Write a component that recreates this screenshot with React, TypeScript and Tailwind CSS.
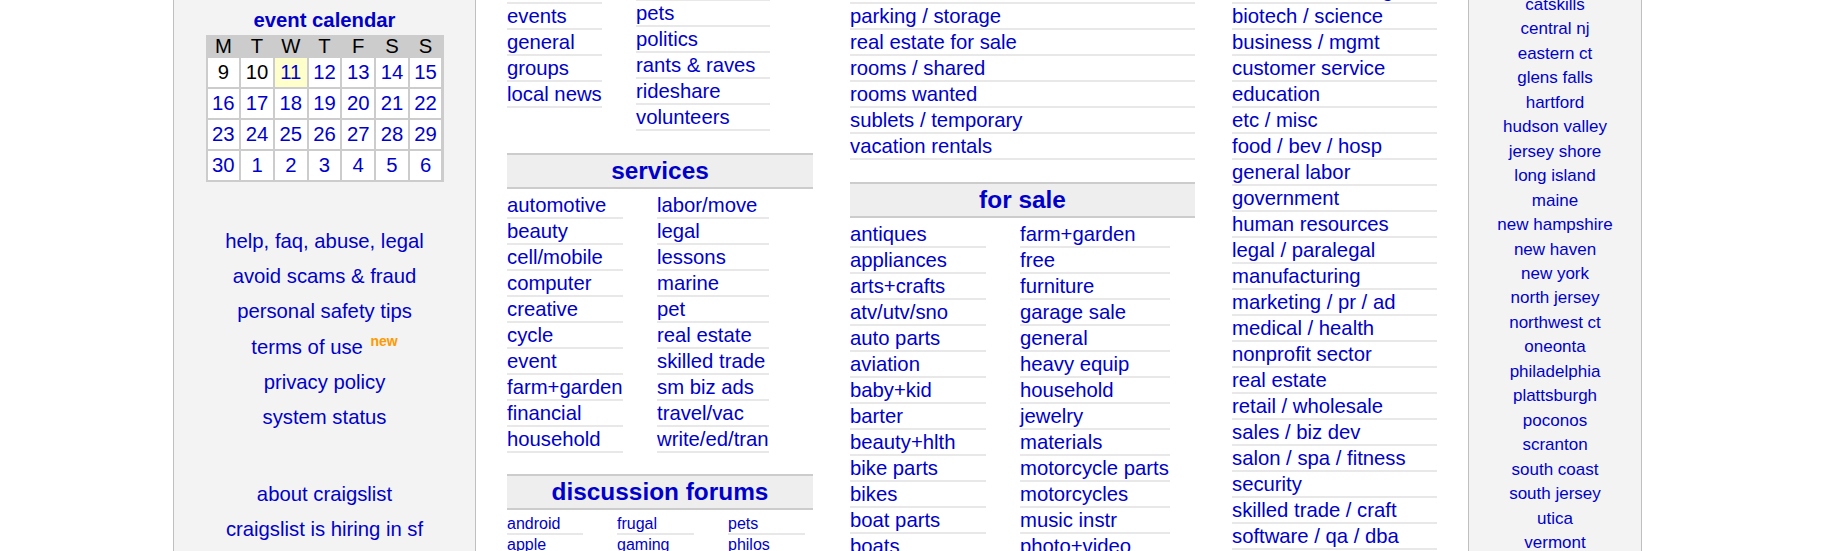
import React from "react";

type ListProps = { items: string[]; w: string; small?: boolean; wrap?: boolean };

function List({ items, w, small, wrap }: ListProps) {
  return (
    <ul className={w}>
      {items.map((t, i) => (
        <li
          key={i}
          className={
            (small ? "text-[16px] leading-[18.4px]" : "text-[20.3px] leading-[23px]") +
            " pt-[1px] border-b-2 border-[#e8e8e8] " +
            (wrap ? "" : "whitespace-nowrap")
          }
        >
          <a className="text-[#0000cc] cursor-pointer">{t}</a>
        </li>
      ))}
    </ul>
  );
}

function Head({ children }: { children: React.ReactNode }) {
  return (
    <h3 className="h-[36px] border-y-2 border-[#cccccc] bg-[#eeeeee] flex items-center justify-center text-[24.4px] font-bold text-[#0000cc] whitespace-nowrap">
      {children}
    </h3>
  );
}

const communityL = ["activities", "artists", "childcare", "classes", "events", "general", "groups", "local news"];
const communityR = ["lost+found", "missed connections", "musicians", "pets", "politics", "rants & raves", "rideshare", "volunteers"];
const servicesL = ["automotive", "beauty", "cell/mobile", "computer", "creative", "cycle", "event", "farm+garden", "financial", "household"];
const servicesR = ["labor/move", "legal", "lessons", "marine", "pet", "real estate", "skilled trade", "sm biz ads", "travel/vac", "write/ed/tran"];
const forumsA = ["android", "apple", "arts", "atheist", "autos", "beauty", "bikes", "celebs", "comp", "cosmos", "diet", "divorce", "dying", "eco", "feedbk", "film", "fixit", "food"];
const forumsB = ["frugal", "gaming", "garden", "haiku", "help", "history", "housing", "jobs", "jokes", "legal", "manners", "marriage", "money", "music", "open", "parent"];
const forumsC = ["pets", "philos", "photo", "politics", "psych", "recover", "religion", "rofo", "science", "spirit", "sports", "super", "tax", "travel", "tv", "vegan", "words", "writing"];
const housing = ["apts / housing", "housing swap", "housing wanted", "office / commercial", "parking / storage", "real estate for sale", "rooms / shared", "rooms wanted", "sublets / temporary", "vacation rentals"];
const saleL = ["antiques", "appliances", "arts+crafts", "atv/utv/sno", "auto parts", "aviation", "baby+kid", "barter", "beauty+hlth", "bike parts", "bikes", "boat parts", "boats", "books", "business", "cars+trucks"];
const saleR = ["farm+garden", "free", "furniture", "garage sale", "general", "heavy equip", "household", "jewelry", "materials", "motorcycle parts", "motorcycles", "music instr", "photo+video", "rvs+camp", "sporting", "tickets"];
const jobs = ["accounting+finance", "admin / office", "arch / engineering", "art / media / design", "biotech / science", "business / mgmt", "customer service", "education", "etc / misc", "food / bev / hosp", "general labor", "government", "human resources", "legal / paralegal", "manufacturing", "marketing / pr / ad", "medical / health", "nonprofit sector", "real estate", "retail / wholesale", "sales / biz dev", "salon / spa / fitness", "security", "skilled trade / craft", "software / qa / dba", "systems / networking", "technical support"];
const nearby = ["catskills", "central nj", "eastern ct", "glens falls", "hartford", "hudson valley", "jersey shore", "long island", "maine", "new hampshire", "new haven", "new york", "north jersey", "northwest ct", "oneonta", "philadelphia", "plattsburgh", "poconos", "scranton", "south coast", "south jersey", "utica", "vermont"];

const weeks = [
  [9, 10, 11, 12, 13, 14, 15],
  [16, 17, 18, 19, 20, 21, 22],
  [23, 24, 25, 26, 27, 28, 29],
  [30, 1, 2, 3, 4, 5, 6],
];

export default function App() {
  return (
    <div className="w-[1838px] h-[551px] overflow-hidden bg-white flex items-stretch pl-[173px] font-['Liberation_Sans',Arial,sans-serif]">
      {/* left bar */}
      <div className="w-[303px] shrink-0 bg-[#f3f3f3] border-x border-[#bfbfbf]">
        <div className="pt-[8px] text-center text-[20.3px] leading-[24px] font-bold text-[#0000cc]">event calendar</div>
        <div className="mt-[3px] mx-auto w-[238px] bg-[#cccccc] px-[2px] pb-[2px] grid grid-cols-7 gap-[2px]">
          {["M", "T", "W", "T", "F", "S", "S"].map((d, i) => (
            <div key={i} className="h-[21px] leading-[23px] text-center text-[20.3px] text-black">
              {d}
            </div>
          ))}
          {weeks.flat().map((n, i) => (
            <div
              key={i}
              className={
                "h-[29px] leading-[29px] text-center text-[20.3px] " +
                (i === 2 ? "bg-[#ffffcc] text-[#0000cc]" : i < 2 ? "bg-white text-black" : "bg-white text-[#0000cc]")
              }
            >
              {n}
            </div>
          ))}
        </div>
        <ul className="mt-[42px] text-center text-[20.3px] text-[#0000cc]">
          <li className="leading-[35.2px]">help, faq, abuse, legal</li>
          <li className="leading-[35.2px]">avoid scams &amp; fraud</li>
          <li className="leading-[35.2px]">personal safety tips</li>
          <li className="leading-[35.2px]">
            terms of use{" "}
            <sup className="text-[14px] font-bold text-[#ff9900] relative top-[-8px] ml-[2px]">new</sup>
          </li>
          <li className="leading-[35.2px]">privacy policy</li>
          <li className="leading-[35.2px]">system status</li>
        </ul>
        <ul className="mt-[42px] text-center text-[20.3px] text-[#0000cc]">
          <li className="leading-[35.2px]">about craigslist</li>
          <li className="leading-[35.2px]">craigslist is hiring in sf</li>
          <li className="leading-[35.2px]">craigslist open source</li>
        </ul>
      </div>

      {/* center */}
      <div className="w-[992px] shrink-0 flex items-start gap-[37px] px-[31px]">
        <div className="w-[306px] shrink-0 mt-[-140px]">
          <Head>community</Head>
          <div className="mt-[4px] flex items-start gap-[34px]">
            <List items={communityL} w="w-[95px]" />
            <List items={communityR} w="w-[134px]" wrap />
          </div>
          <div className="mt-[22px]">
            <Head>services</Head>
          </div>
          <div className="mt-[4px] flex items-start gap-[34px]">
            <List items={servicesL} w="w-[116px]" />
            <List items={servicesR} w="w-[112px]" />
          </div>
          <div className="mt-[21px]">
            <Head>discussion forums</Head>
          </div>
          <div className="mt-[4px] flex items-start gap-[34px]">
            <List items={forumsA} w="w-[76px]" small />
            <List items={forumsB} w="w-[77px]" small />
            <List items={forumsC} w="w-[77px]" small />
          </div>
        </div>

        <div className="w-[345px] shrink-0 mt-[-140px]">
          <Head>housing</Head>
          <div className="mt-[4px]">
            <List items={housing} w="w-full" />
          </div>
          <div className="mt-[22px]">
            <Head>for sale</Head>
          </div>
          <div className="mt-[4px] flex items-start gap-[34px]">
            <List items={saleL} w="w-[136px]" />
            <List items={saleR} w="w-[150px]" />
          </div>
        </div>

        <div className="w-[205px] shrink-0 mt-[-140px]">
          <Head>jobs</Head>
          <div className="mt-[4px]">
            <List items={jobs} w="w-full" />
          </div>
        </div>
      </div>

      {/* right bar */}
      <div className="w-[174px] shrink-0 bg-[#f3f3f3] border-x border-[#bfbfbf]">
        <ul className="mt-[-7px] text-center text-[17px] text-[#0000cc]">
          {nearby.map((n, i) => (
            <li key={i} className="leading-[24.45px] whitespace-nowrap">
              {n}
            </li>
          ))}
        </ul>
      </div>
    </div>
  );
}
